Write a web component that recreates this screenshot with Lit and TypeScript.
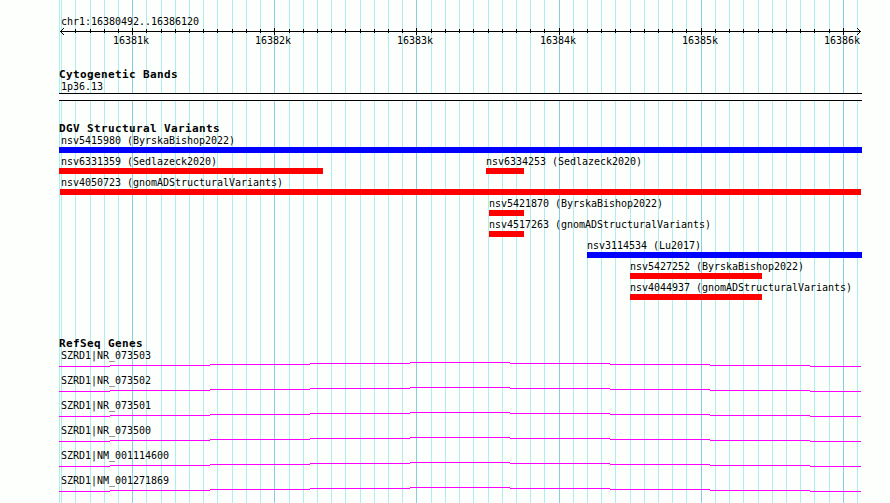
import { LitElement, html, svg, css } from 'lit';
import { customElement, property } from 'lit/decorators.js';

const REGION_START = 16380492;
const REGION_END = 16386120;
const PLOT_WIDTH = 803;
const SCALE = 800 / (REGION_END - REGION_START + 1);

// position in px, relative to the left edge of the plot
const toX = (pos: number) => Math.round(1 + (pos - REGION_START) * SCALE);

interface Tick {
  pos: number;
  x: number;
  major: boolean;
}

const TICKS: Tick[] = [];
for (let pos = 16380500; pos <= 16386100; pos += 100) {
  TICKS.push({ pos, x: toX(pos), major: pos % 1000 === 0 });
}

interface Variant {
  name: string;
  kind: 'gain' | 'loss';
  x: number;
  width: number;
}

const VARIANT_ROWS: Variant[][] = [
  [{ name: 'nsv5415980 (ByrskaBishop2022)', kind: 'gain', x: 0, width: 803 }],
  [
    { name: 'nsv6331359 (Sedlazeck2020)', kind: 'loss', x: 0, width: 264 },
    { name: 'nsv6334253 (Sedlazeck2020)', kind: 'loss', x: 427, width: 38 },
  ],
  [{ name: 'nsv4050723 (gnomADStructuralVariants)', kind: 'loss', x: 1, width: 801 }],
  [{ name: 'nsv5421870 (ByrskaBishop2022)', kind: 'loss', x: 430, width: 35 }],
  [{ name: 'nsv4517263 (gnomADStructuralVariants)', kind: 'loss', x: 430, width: 35 }],
  [{ name: 'nsv3114534 (Lu2017)', kind: 'gain', x: 528, width: 275 }],
  [{ name: 'nsv5427252 (ByrskaBishop2022)', kind: 'loss', x: 571, width: 132 }],
  [{ name: 'nsv4044937 (gnomADStructuralVariants)', kind: 'loss', x: 571, width: 132 }],
];

const GENES = [
  'SZRD1|NR_073503',
  'SZRD1|NR_073502',
  'SZRD1|NR_073501',
  'SZRD1|NR_073500',
  'SZRD1|NM_001114600',
  'SZRD1|NM_001271869',
];

@customElement('genome-grid')
export class GenomeGrid extends LitElement {
  static styles = css`
    :host {
      display: block;
    }
    svg {
      display: block;
    }
    .minor {
      fill: #afeeee;
    }
    .major {
      fill: #87ceeb;
    }
  `;

  render() {
    return html`
      <svg width=${PLOT_WIDTH} height="503" shape-rendering="crispEdges">
        <rect class="minor" x="0" y="0" width="1" height="503"></rect>
        ${TICKS.map(
          (t) => svg`<rect class=${t.major ? 'major' : 'minor'} x=${t.x} y="0" width="1" height="503"></rect>`
        )}
      </svg>
    `;
  }
}

@customElement('genome-ruler')
export class GenomeRuler extends LitElement {
  static styles = css`
    :host {
      display: block;
    }
    svg {
      display: block;
      overflow: visible;
    }
    text {
      font: 10px 'DejaVu Sans Mono', monospace;
      letter-spacing: -0.02px;
    }
  `;

  render() {
    return html`
      <svg width=${PLOT_WIDTH} height="22" shape-rendering="crispEdges">
        <rect x="1" y="5" width="801" height="1"></rect>
        ${TICKS.slice(1, -1).map((t) =>
          t.major
            ? svg`<rect x=${t.x} y="2" width="1" height="7"></rect>`
            : svg`<rect x=${t.x} y="3" width="1" height="4"></rect>`
        )}
        <path d="M2 4h1v1h-1zM3 3h1v1h-1zM4 2h1v1h-1zM2 6h1v1h-1zM3 7h1v1h-1zM4 8h1v1h-1z"></path>
        <path d="M800 4h1v1h-1zM799 3h1v1h-1zM798 2h1v1h-1zM800 6h1v1h-1zM799 7h1v1h-1zM798 8h1v1h-1z"></path>
        ${TICKS.filter((t) => t.major).map(
          (t) => svg`<text x=${t.x - 19} y="18">${t.pos / 1000}k</text>`
        )}
      </svg>
    `;
  }
}

@customElement('variant-row')
export class VariantRow extends LitElement {
  @property({ attribute: false }) variants: Variant[] = [];

  static styles = css`
    :host {
      display: grid;
      height: 21px;
    }
    .variant {
      grid-area: 1 / 1;
      white-space: nowrap;
    }
    .label {
      height: 12px;
    }
    .bar {
      height: 6px;
    }
    .gain {
      background: #0000ff;
    }
    .loss {
      background: #ff0000;
    }
  `;

  render() {
    // labels of variants cut off at the left edge stay inside the plot
    return this.variants.map(
      (v) => html`
        <div class="variant">
          <div class="label" style="margin-left: ${Math.max(v.x, 2)}px">${v.name}</div>
          <div class="bar ${v.kind}" style="margin-left: ${v.x}px; width: ${v.width}px"></div>
        </div>
      `
    );
  }
}

@customElement('gene-row')
export class GeneRow extends LitElement {
  @property({ type: String }) name = '';

  static styles = css`
    :host {
      display: block;
      height: 25px;
    }
    .label {
      height: 12px;
      padding-left: 2px;
    }
    svg {
      display: block;
    }
    path {
      fill: none;
      stroke: #ff00ff;
    }
  `;

  render() {
    // shallow intron peak, one pixel per step
    return html`
      <div class="label">${this.name}</div>
      <svg width=${PLOT_WIDTH} height="7" shape-rendering="crispEdges">
        <path
          d="M0 4.5H51M51 3.5H151M151 2.5H251M251 1.5H351M351 .5H451M451 1.5H551M551 2.5H651M651 3.5H751M751 4.5H802"
        ></path>
      </svg>
    `;
  }
}

@customElement('app-root')
export class AppRoot extends LitElement {
  static styles = css`
    :host {
      display: grid;
      grid-template-columns: 803px;
      box-sizing: border-box;
      width: 890px;
      height: 503px;
      padding-left: 59px;
      overflow: hidden;
      background: #fdfffc;
      color: #000;
      font: 10px/12px 'DejaVu Sans Mono', monospace;
      letter-spacing: -0.02px;
      white-space: nowrap;
    }
    genome-grid,
    .tracks {
      grid-area: 1 / 1;
    }
    .tracks {
      display: flex;
      flex-direction: column;
      z-index: 1;
      padding-top: 16px;
    }
    .region {
      height: 10px;
      padding-left: 2px;
    }
    h2 {
      margin: 0;
      height: 13px;
      font-size: 11px;
      font-weight: bold;
      line-height: 13px;
      letter-spacing: 0.378px;
    }
    .cytobands {
      padding-top: 20px;
    }
    .band-name {
      height: 12px;
      padding-left: 2px;
    }
    .band {
      box-sizing: border-box;
      height: 8px;
      border: solid #000;
      border-width: 1px 0;
      background: #fff;
    }
    .variants {
      padding-top: 21px;
    }
    .genes {
      padding-top: 34px;
    }
  `;

  render() {
    return html`
      <genome-grid></genome-grid>
      <div class="tracks">
        <div class="region">chr1:${REGION_START}..${REGION_END}</div>
        <genome-ruler></genome-ruler>
        <section class="cytobands">
          <h2>Cytogenetic Bands</h2>
          <div class="band-name">1p36.13</div>
          <div class="band"></div>
        </section>
        <section class="variants">
          <h2>DGV Structural Variants</h2>
          ${VARIANT_ROWS.map((row) => html`<variant-row .variants=${row}></variant-row>`)}
        </section>
        <section class="genes">
          <h2>RefSeq Genes</h2>
          ${GENES.map((name) => html`<gene-row name=${name}></gene-row>`)}
        </section>
      </div>
    `;
  }
}

declare global {
  interface HTMLElementTagNameMap {
    'app-root': AppRoot;
    'genome-grid': GenomeGrid;
    'genome-ruler': GenomeRuler;
    'variant-row': VariantRow;
    'gene-row': GeneRow;
  }
}
